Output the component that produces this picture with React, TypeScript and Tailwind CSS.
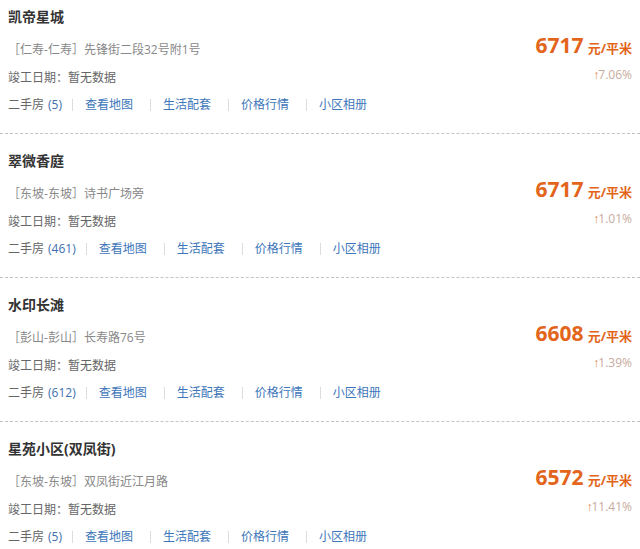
import React from 'react';

type Estate = {
  name: string;
  area: string;
  addr: string;
  count: number;
  price: number;
  rise: string;
};

const estates: Estate[] = [
  { name: '凯帝星城', area: '仁寿-仁寿', addr: '先锋街二段32号附1号', count: 5, price: 6717, rise: '7.06%' },
  { name: '翠微香庭', area: '东坡-东坡', addr: '诗书广场旁', count: 461, price: 6717, rise: '1.01%' },
  { name: '水印长滩', area: '彭山-彭山', addr: '长寿路76号', count: 612, price: 6608, rise: '1.39%' },
  { name: '星苑小区(双凤街)', area: '东坡-东坡', addr: '双凤街近江月路', count: 5, price: 6572, rise: '11.41%' },
];

const links = ['查看地图', '生活配套', '价格行情', '小区相册'];

function EstateItem({ item }: { item: Estate }) {
  return (
    <div className="mb-[10px] border-b border-dashed border-[#c4c4c4] h-[134px] flex justify-between px-[8px]">
      {/* left info */}
      <div className="flex flex-col pt-[7px]">
        <div className="h-[20px] leading-[20px] text-[14px] font-bold text-[#333]">{item.name}</div>
        <div className="mt-[9px] h-[28px] leading-[28px] text-[12px] text-[#888]">
          ［{item.area}］{item.addr}
        </div>
        <div className="h-[28px] leading-[28px] text-[12px] text-[#666]">竣工日期：暂无数据</div>
        <div className="h-[26px] flex items-center text-[12px]">
          <span className="text-[#666]">二手房</span>
          <span className="ml-[4px] text-[#3d6fb0]">({item.count})</span>
          {links.map((l, i) => (
            <React.Fragment key={l}>
              <span className={`w-px h-[12px] bg-[#dddddd] mr-[12px] ${i === 0 ? 'ml-[10px]' : 'ml-[17px]'}`} />
              <span className="text-[#3d76ba]">{l}</span>
            </React.Fragment>
          ))}
        </div>
      </div>

      {/* right price */}
      <div className="flex flex-col items-end pt-[31px]">
        <div className="h-[28px] flex items-baseline text-[#e2651b] font-bold">
          <span className="text-[21px] leading-[28px]">{item.price}</span>
          <span className="ml-[4px] text-[13px]">元/平米</span>
        </div>
        <div className="mt-[6px] h-[20px] leading-[20px] text-[12px] text-[#c7ab9e]">
          <span className="text-[#d9874f] font-['Liberation_Sans'] mr-[-1px]">↑</span>
          {item.rise}
        </div>
      </div>
    </div>
  );
}

export default function App() {
  return (
    <div
      className="w-[640px] h-[549px] overflow-hidden bg-white"
      style={{ fontFamily: '"Open Sans", "Noto Sans CJK SC", sans-serif' }}
    >
      {estates.map((e) => (
        <EstateItem key={e.name} item={e} />
      ))}
    </div>
  );
}
